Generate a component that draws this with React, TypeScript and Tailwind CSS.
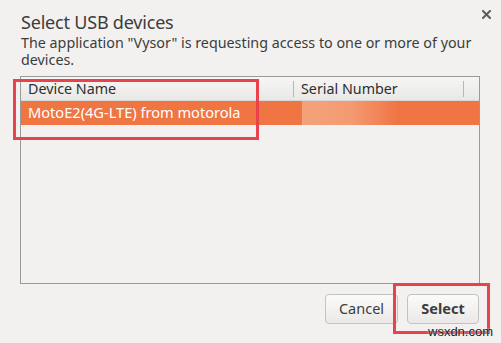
import React from "react";

export default function App() {
  return (
    <div
      className="relative w-[501px] h-[343px] overflow-hidden bg-[#f2f1f0] text-[#3c3c3c]"
      style={{ fontFamily: '"Noto Sans", "Open Sans", sans-serif' }}
    >
      {/* close */}
      <div className="absolute left-[480px] top-[8px] w-[12px] h-[12px] flex items-center justify-center">
        <svg width="9" height="9" viewBox="0 0 9 9">
          <path d="M1 1 L8 8 M8 1 L1 8" stroke="#5c5c5c" strokeWidth="2" strokeLinecap="square" />
        </svg>
      </div>

      <div className="flex flex-col pl-[21px] pt-[10px]">
        <div className="text-[18px] leading-[24px] tracking-[-0.2px]">Select USB devices</div>
        <div className="text-[14.3px] leading-[17px]">
          The application "Vysor" is requesting access to one or more of your
        </div>
        <div className="text-[14.3px] leading-[17px]">devices.</div>
      </div>

      {/* table */}
      <div className="ml-[20px] mt-[8px] w-[460px] h-[208px] border border-[#9a9a9a] flex flex-col">
        <div className="h-[24px] flex items-center bg-gradient-to-b from-[#f6f6f5] to-[#e9e8e7] border-b border-[#d8d7d6] text-[14.3px] text-[#2e2e2e]">
          <div className="w-[273px] pl-[7px] flex items-center justify-between h-full">
            <span>Device Name</span>
            <span className="w-px h-[16px] bg-[#b8b8b8]" />
          </div>
          <div className="w-[170px] pl-[7px] flex items-center justify-between h-full">
            <span>Serial Number</span>
            <span className="w-px h-[16px] bg-[#b8b8b8]" />
          </div>
        </div>
        <div className="h-[24px] flex items-center bg-[#ef7543] text-white text-[14.6px]">
          <div className="w-[273px] pl-[7px]">MotoE2(4G-LTE) from motorola</div>
          <div className="h-full w-[96px] ml-[8px] bg-gradient-to-r from-[#f4a27c] via-[#f39b72] to-[#ef7543]" />
        </div>
        <div className="flex-1" />
      </div>

      {/* buttons */}
      <div className="flex justify-end gap-[9px] pr-[22px] mt-[10px]">
        <div className="w-[73px] h-[30px] rounded-[4px] border border-[#c4c3c2] bg-gradient-to-b from-[#fbfbfa] to-[#eae9e8] flex items-center justify-center text-[14.5px] text-[#3c3c3c]">
          Cancel
        </div>
        <div className="w-[72px] h-[30px] rounded-[4px] border border-[#c4c3c2] bg-gradient-to-b from-[#fbfbfa] to-[#eae9e8] flex items-center justify-center text-[14.5px] font-bold text-[#3c3c3c]">
          Select
        </div>
      </div>

      {/* annotation boxes */}
      <div className="absolute left-[13px] top-[79px] w-[246px] h-[61px] border-[3px] border-[#e8424a]" />
      <div className="absolute left-[393px] top-[283px] w-[97px] h-[51px] border-[3px] border-[#e8424a]" />

      {/* watermark */}
      <div
        className="absolute left-[428px] top-[324px] text-[13px] leading-[16px] text-[#222]"
        style={{ fontFamily: '"Liberation Sans", Arial, sans-serif', textShadow: "0 0 2px #fff" }}
      >
        wsxdn.com
      </div>
    </div>
  );
}
